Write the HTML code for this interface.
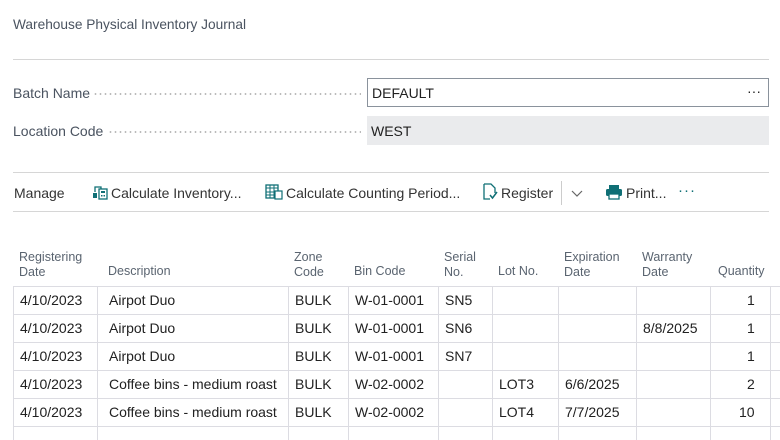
<!DOCTYPE html>
<html><head><meta charset="utf-8"><style>
*{margin:0;padding:0;box-sizing:border-box}
body{width:780px;height:440px;background:#fff;font-family:"Liberation Sans",sans-serif;color:#212121;position:relative;overflow:hidden;font-size:14px}
.a{position:absolute;white-space:nowrap}
.hl{position:absolute;height:1px;background:#d6d6d6}
.dots{position:absolute;height:2px;background-image:radial-gradient(circle,#bbb 0.8px,transparent 1px);background-size:5px 2px}
.vl{position:absolute;width:1px;background:#dcdce2;top:286px;height:154px}
.rl{position:absolute;left:13px;width:767px;height:1px;background:#dcdce2}
.h{color:#5a6470;font-size:12.5px;line-height:15px}
.t{color:#0f6f75}
</style></head><body>
<div class="a" style="left:13px;top:17px;font-size:13.7px;color:#4a5360">Warehouse Physical Inventory Journal</div>
<div class="hl" style="left:13px;top:59px;width:756px"></div>
<div class="a" style="left:13px;top:85px;color:#4a5360">Batch Name</div>
<div class="dots" style="left:93px;top:93px;width:268px"></div>
<div class="a" style="left:367px;top:78px;width:402px;height:29px;border:1px solid #8a929c;padding:6px 4px">DEFAULT<span style="position:absolute;right:7px;top:4px">···</span></div>
<div class="a" style="left:13px;top:123px;color:#4a5360">Location Code</div>
<div class="dots" style="left:108px;top:131px;width:253px"></div>
<div class="a" style="left:367px;top:116px;width:402px;height:29px;background:#eaebed;padding:7px 4px">WEST</div>
<div class="hl" style="left:13px;top:172px;width:756px"></div>
<div class="hl" style="left:13px;top:211px;width:756px"></div>
<div class="a" style="left:14px;top:185px;color:#333">Manage</div>
<svg class="a" style="left:92px;top:184px" width="16" height="16" viewBox="0 0 16 16"><rect x="7" y="5" width="8" height="10" fill="none" stroke="#0f6f75" stroke-width="1.3"/><rect x="9" y="7" width="4" height="2" fill="#0f6f75"/><rect x="9" y="11" width="1.5" height="1.5" fill="#0f6f75"/><rect x="11.5" y="11" width="1.5" height="1.5" fill="#0f6f75"/><rect x="1" y="9" width="4" height="5" fill="#0f6f75"/><path d="M3 8V3h6v2" fill="none" stroke="#0f6f75" stroke-width="1.3"/></svg>
<div class="a" style="left:111px;top:185px;color:#333">Calculate Inventory...</div>
<svg class="a" style="left:265px;top:184px" width="18" height="16" viewBox="0 0 18 16"><rect x="1" y="1" width="12" height="13" fill="none" stroke="#0f6f75" stroke-width="1.3"/><path d="M1 4h12M5 1v13M9 1v13M1 8h12M1 11h12" stroke="#0f6f75"/><rect x="10" y="7" width="7" height="8" fill="#fff" stroke="#0f6f75" stroke-width="1.2"/></svg>
<div class="a" style="left:286px;top:185px;color:#333">Calculate Counting Period...</div>
<svg class="a" style="left:482px;top:183px" width="16" height="18" viewBox="0 0 16 18"><path d="M2 1h7l4 4v5M2 1v15h6" fill="none" stroke="#0f6f75" stroke-width="1.3"/><path d="M8 12l2.5 3 4.5-6" fill="none" stroke="#0f6f75" stroke-width="1.5"/></svg>
<div class="a" style="left:501px;top:185px;color:#333">Register</div>
<div class="a" style="left:561px;top:181px;width:1px;height:24px;background:#ccc"></div>
<svg class="a" style="left:570px;top:189px" width="14" height="10"><path d="M2 2l5 5 5-5" fill="none" stroke="#666" stroke-width="1.2"/></svg>
<svg class="a" style="left:605px;top:184px" width="18" height="16" viewBox="0 0 18 16"><rect x="4" y="1" width="10" height="4" fill="#0f6f75"/><rect x="1" y="5" width="16" height="7" rx="1.5" fill="#0f6f75"/><rect x="4" y="10" width="10" height="5" fill="#fff" stroke="#0f6f75" stroke-width="1.3"/></svg>
<div class="a" style="left:626px;top:185px;color:#333">Print...</div>
<div class="a t" style="left:678px;top:182px;font-size:15px;letter-spacing:1px">···</div>

<div class="a h" style="left:19px;top:250px">Registering<br>Date</div>
<div class="a h" style="left:108px;top:264px">Description</div>
<div class="a h" style="left:294px;top:250px">Zone<br>Code</div>
<div class="a h" style="left:354px;top:264px">Bin Code</div>
<div class="a h" style="left:444px;top:250px">Serial<br>No.</div>
<div class="a h" style="left:498px;top:264px">Lot No.</div>
<div class="a h" style="left:564px;top:250px">Expiration<br>Date</div>
<div class="a h" style="left:642px;top:250px">Warranty<br>Date</div>
<div class="a h" style="left:718px;top:264px">Quantity</div>

<div class="rl" style="top:286px"></div><div class="rl" style="top:314px"></div><div class="rl" style="top:342px"></div><div class="rl" style="top:370px"></div><div class="rl" style="top:398px"></div><div class="rl" style="top:426px"></div>
<div class="vl" style="left:13px"></div><div class="vl" style="left:97px"></div><div class="vl" style="left:288px"></div><div class="vl" style="left:348px"></div><div class="vl" style="left:438px"></div><div class="vl" style="left:492px"></div><div class="vl" style="left:558px"></div><div class="vl" style="left:636px"></div><div class="vl" style="left:710px"></div><div class="vl" style="left:770px"></div>

<div style="position:absolute;left:0;top:292px">
<div class="a" style="top:0;left:20px">4/10/2023</div><div class="a" style="top:0;left:109px">Airpot Duo</div><div class="a" style="top:0;left:295px">BULK</div><div class="a" style="top:0;left:355px">W-01-0001</div><div class="a" style="top:0;left:445px">SN5</div><div class="a" style="top:0;left:747px">1</div>
<div class="a" style="top:28px;left:20px">4/10/2023</div><div class="a" style="top:28px;left:109px">Airpot Duo</div><div class="a" style="top:28px;left:295px">BULK</div><div class="a" style="top:28px;left:355px">W-01-0001</div><div class="a" style="top:28px;left:445px">SN6</div><div class="a" style="top:28px;left:643px">8/8/2025</div><div class="a" style="top:28px;left:747px">1</div>
<div class="a" style="top:56px;left:20px">4/10/2023</div><div class="a" style="top:56px;left:109px">Airpot Duo</div><div class="a" style="top:56px;left:295px">BULK</div><div class="a" style="top:56px;left:355px">W-01-0001</div><div class="a" style="top:56px;left:445px">SN7</div><div class="a" style="top:56px;left:747px">1</div>
<div class="a" style="top:84px;left:20px">4/10/2023</div><div class="a" style="top:84px;left:109px">Coffee bins - medium roast</div><div class="a" style="top:84px;left:295px">BULK</div><div class="a" style="top:84px;left:355px">W-02-0002</div><div class="a" style="top:84px;left:499px">LOT3</div><div class="a" style="top:84px;left:565px">6/6/2025</div><div class="a" style="top:84px;left:747px">2</div>
<div class="a" style="top:112px;left:20px">4/10/2023</div><div class="a" style="top:112px;left:109px">Coffee bins - medium roast</div><div class="a" style="top:112px;left:295px">BULK</div><div class="a" style="top:112px;left:355px">W-02-0002</div><div class="a" style="top:112px;left:499px">LOT4</div><div class="a" style="top:112px;left:565px">7/7/2025</div><div class="a" style="top:112px;left:739px">10</div>
</div>
</body></html>
